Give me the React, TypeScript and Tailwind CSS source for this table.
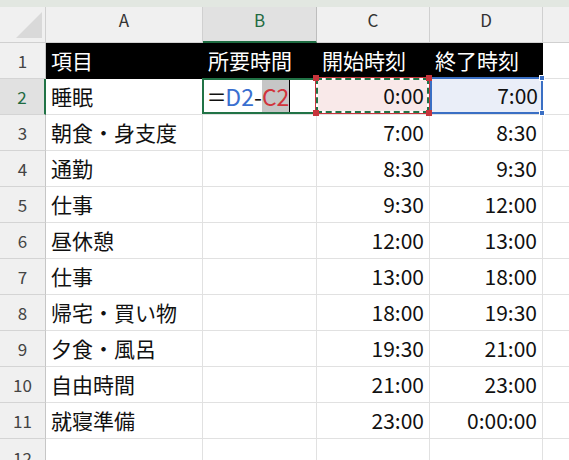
import React from "react";

const FONT = { fontFamily: '"Noto Sans CJK JP", "Noto Sans", sans-serif' };

const rows: [string, string, string][] = [
  ["睡眠", "0:00", "7:00"],
  ["朝食・身支度", "7:00", "8:30"],
  ["通勤", "8:30", "9:30"],
  ["仕事", "9:30", "12:00"],
  ["昼休憩", "12:00", "13:00"],
  ["仕事", "13:00", "18:00"],
  ["帰宅・買い物", "18:00", "19:30"],
  ["夕食・風呂", "19:30", "21:00"],
  ["自由時間", "21:00", "23:00"],
  ["就寝準備", "23:00", "0:00:00"],
];

function RowHead({ n, active }: { n: number; active?: boolean }) {
  return (
    <div
      className={
        active
          ? "flex items-center justify-center bg-[#e1e1e1] border-b border-[#d4d4d4] border-r-2 border-r-[#217346] text-[#1e6b41] text-[17px]"
          : "flex items-center justify-center bg-[#f0f0f0] border-b border-r border-[#d4d4d4] border-r-[#c6c6c6] text-[#444] text-[17px]"
      }
    >
      {n}
    </div>
  );
}

function TextCell({ children }: { children?: React.ReactNode }) {
  return (
    <div className="flex items-center pl-[5px] border-r border-b border-[#e1e1e1] text-[21px] text-[#111] whitespace-nowrap">
      {children}
    </div>
  );
}

function NumCell({ children }: { children?: React.ReactNode }) {
  return (
    <div className="flex items-center justify-end pr-[5px] border-r border-b border-[#e1e1e1] text-[21px] text-[#111] whitespace-nowrap">
      {children}
    </div>
  );
}

function Handle({ className }: { className: string }) {
  return <div className={"absolute w-[6px] h-[6px] " + className} />;
}

export default function App() {
  return (
    <div className="w-[569px] h-[460px] overflow-hidden bg-white" style={FONT}>
      <div className="h-[7px] bg-[#e2e7e1]" />
      <div className="grid grid-cols-[46px_157px_114px_113px_113px_1fr] auto-rows-[36px]">
        {/* header row */}
        <div className="relative bg-[#f0f0f0] border-b border-r border-[#d0d0d0]">
          <div
            className="absolute left-[16px] top-[5px] w-[26px] h-[26px] bg-[#d9d9d9]"
            style={{ clipPath: "polygon(100% 0, 100% 100%, 0 100%)" }}
          />
        </div>
        <div className="flex items-center justify-center pb-[10px] bg-[#f0f0f0] border-b border-r border-[#d0d0d0] text-[17px] text-[#333]">
          A
        </div>
        <div className="flex items-center justify-center pb-[8px] bg-[#e1e1e1] border-r border-[#bdbdbd] border-b-2 border-b-[#1e6b41] text-[17px] text-[#1e6b41]">
          B
        </div>
        <div className="flex items-center justify-center pb-[10px] bg-[#f0f0f0] border-b border-r border-[#d0d0d0] text-[17px] text-[#333]">
          C
        </div>
        <div className="flex items-center justify-center pb-[10px] bg-[#f0f0f0] border-b border-r border-[#d0d0d0] text-[17px] text-[#333]">
          D
        </div>
        <div className="bg-[#f0f0f0] border-b border-[#d0d0d0]" />

        {/* row 1 */}
        <RowHead n={1} />
        <div className="col-span-4 grid grid-cols-[157px_114px_113px_113px] bg-black text-white text-[21px]">
          <div className="flex items-center pl-[5px]">項目</div>
          <div className="flex items-center pl-[5px]">所要時間</div>
          <div className="flex items-center pl-[5px]">開始時刻</div>
          <div className="flex items-center pl-[5px]">終了時刻</div>
        </div>
        <div className="border-b border-[#e1e1e1]" />

        {/* data rows */}
        {rows.map(([a, c, d], i) => {
          const n = i + 2;
          if (n === 2) {
            return (
              <React.Fragment key={n}>
                <RowHead n={n} active />
                <TextCell>{a}</TextCell>
                <div className="relative border-r border-b border-[#e1e1e1]">
                  <div className="absolute -top-[1px] -left-[1px] -right-[2px] bottom-0 border-2 border-[#217346] bg-white flex items-center pl-[6px] text-[23px] whitespace-nowrap z-10">
                    <span className="text-[#111] text-[24px] mr-[2px] scale-x-125 inline-block">=</span>
                    <span className="text-[#3a6fd0]">D2</span>
                    <span className="text-[#111]">-</span>
                    <span className="text-[#d1343c] bg-[#c6c6c6] h-full flex items-center">C2</span>
                    <span className="w-[1px] h-full bg-black" />
                  </div>
                </div>
                <div className="relative border-r border-b border-[#e1e1e1]">
                  <div className="absolute -top-[2px] -left-[2px] -right-[1px] bottom-0 border border-[#c8353c] bg-white z-20">
                    <div className="w-full h-full border-2 border-dashed border-[#217346] bg-[#f9e9e9] bg-clip-padding flex items-center justify-end pr-[3px] text-[21px] text-[#111]">
                      {c}
                    </div>
                    <Handle className="-left-[3px] -top-[3px] bg-[#c8353c]" />
                    <Handle className="-right-[3px] -top-[3px] bg-[#c8353c]" />
                    <Handle className="-left-[3px] -bottom-[3px] bg-[#c8353c]" />
                    <Handle className="-right-[3px] -bottom-[3px] bg-[#c8353c]" />
                  </div>
                </div>
                <div className="relative border-r border-b border-[#e1e1e1]">
                  <div className="absolute -top-[2px] left-0 -right-[1px] bottom-0 border-2 border-[#3a6fc4] bg-[#eaeef8] flex items-center justify-end pr-[3px] text-[21px] text-[#111] z-10">
                    {d}
                    <Handle className="-right-[4px] -top-[4px] bg-[#3a6fc4] border border-white" />
                    <Handle className="-right-[4px] -bottom-[4px] bg-[#3a6fc4] border border-white" />
                  </div>
                </div>
                <div className="border-b border-[#e1e1e1]" />
              </React.Fragment>
            );
          }
          return (
            <React.Fragment key={n}>
              <RowHead n={n} />
              <TextCell>{a}</TextCell>
              <NumCell />
              <NumCell>{c}</NumCell>
              <NumCell>{d}</NumCell>
              <div className="border-b border-[#e1e1e1]" />
            </React.Fragment>
          );
        })}

        {/* row 12 */}
        <div className="flex items-start justify-center pt-[6px] bg-[#f0f0f0] border-b border-r border-[#d4d4d4] border-r-[#c6c6c6] text-[#444] text-[17px]">
          12
        </div>
        <TextCell />
        <NumCell />
        <NumCell />
        <NumCell />
        <div className="border-b border-[#e1e1e1]" />
      </div>
    </div>
  );
}
